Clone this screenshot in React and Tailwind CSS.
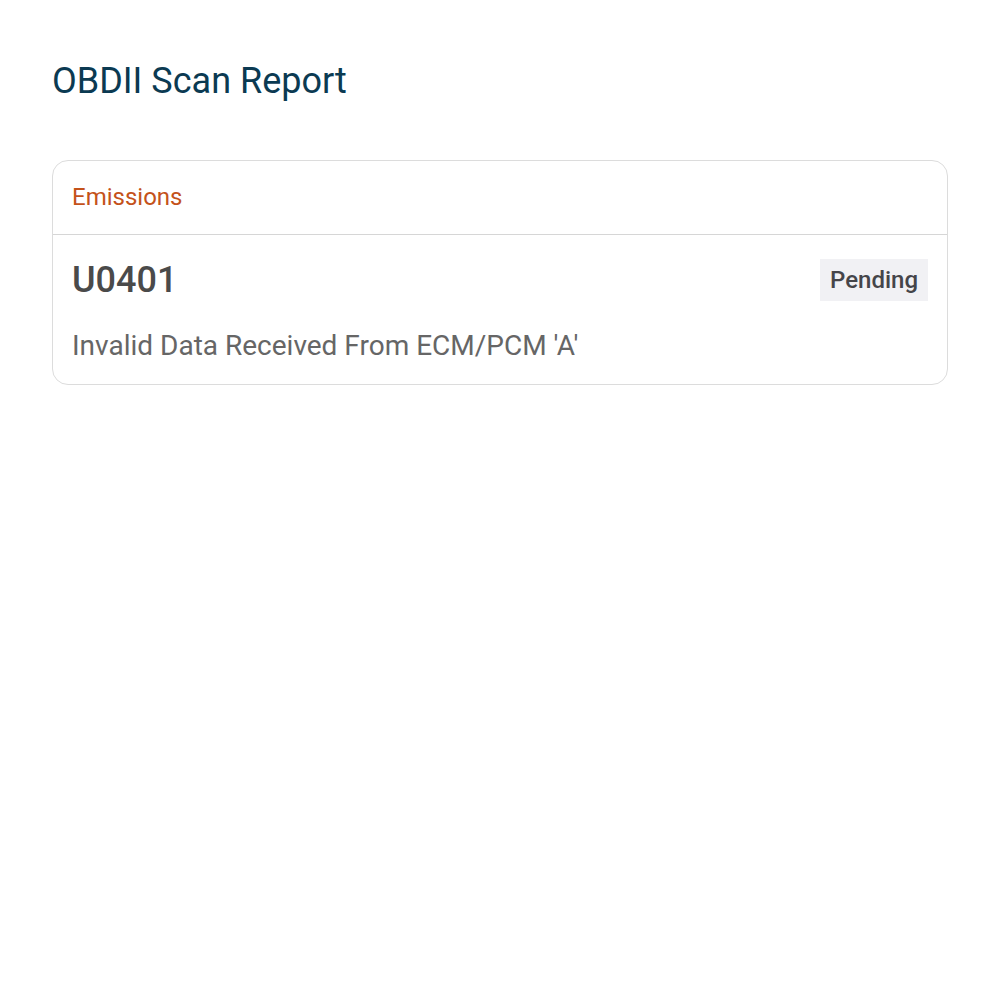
import React from "react";

const codes = [
  {
    code: "U0401",
    status: "Pending",
    description: "Invalid Data Received From ECM/PCM 'A'",
  },
];

const ScanReport = () => {
  return (
    <div className="min-h-screen bg-white px-[52px] pt-[58px] font-['Roboto',sans-serif]">
      <h1 className="text-[36px] leading-[46px] text-[#0b3a52]">OBDII Scan Report</h1>

      <div className="mt-[56px] rounded-2xl border border-[#dcdcdc] bg-white">
        <div className="border-b border-[#d6d6d6] px-[19px] py-[22px] text-[24px] leading-[29px] text-[#c4521a]">
          Emissions
        </div>
        {codes.map((c) => (
          <div key={c.code} className="px-[19px] pt-6 pb-[22px]">
            <div className="flex items-center justify-between">
              <span className="text-[36px] font-medium leading-[42px] text-[#4a4a4a]">{c.code}</span>
              <span className="bg-[#f1f1f4] px-[10px] py-[7px] text-[24px] font-medium leading-[28px] text-[#454549]">
                {c.status}
              </span>
            </div>
            <p className="mt-[28px] text-[28px] leading-[33px] text-[#666]">{c.description}</p>
          </div>
        ))}
      </div>
    </div>
  );
};

export default ScanReport;
